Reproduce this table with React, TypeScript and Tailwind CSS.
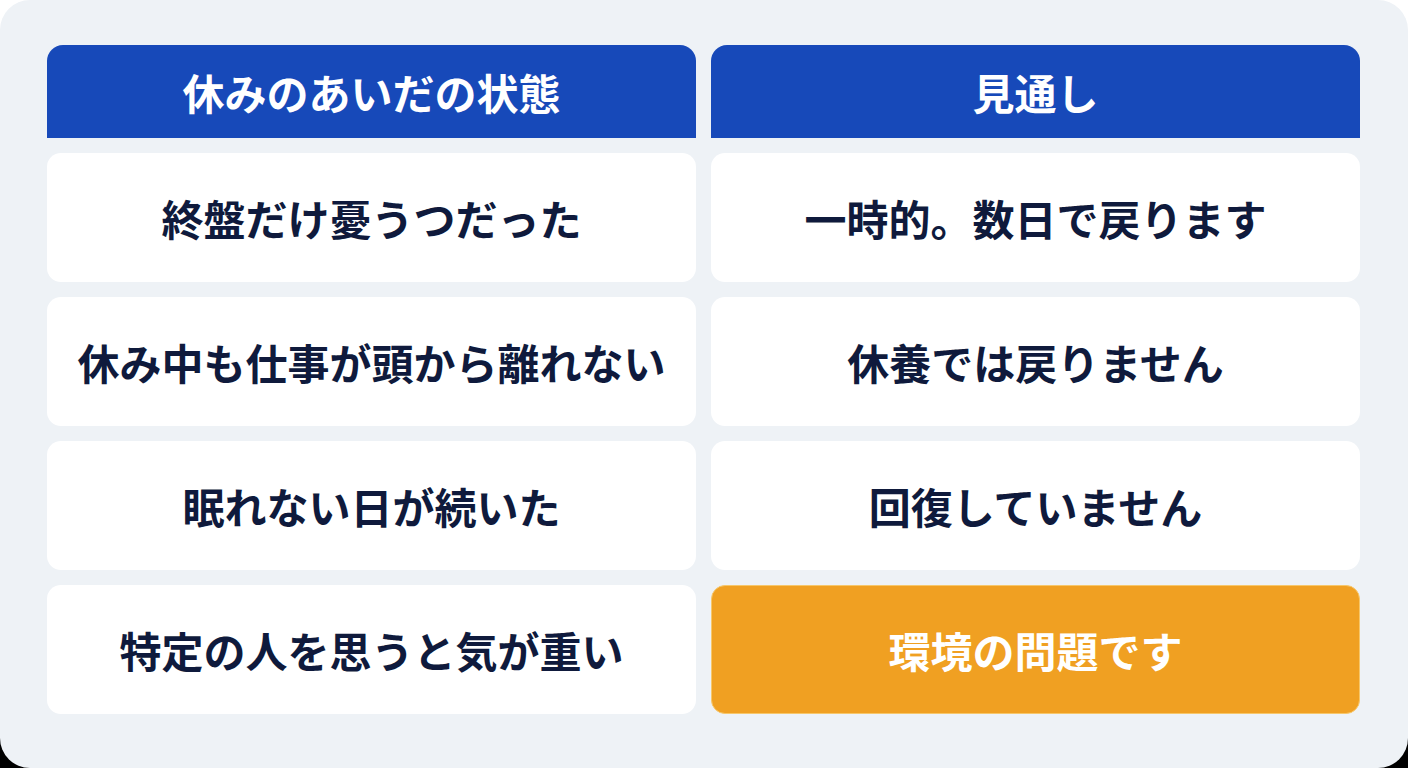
import React from "react";

const left = [
  "終盤だけ憂うつだった",
  "休み中も仕事が頭から離れない",
  "眠れない日が続いた",
  "特定の人を思うと気が重い",
];
const right = [
  "一時的。数日で戻ります",
  "休養では戻りません",
  "回復していません",
  "環境の問題です",
];

export default function App() {
  const font = { fontFamily: '"Noto Sans CJK JP", "Noto Sans", sans-serif' };
  return (
    <div className="w-[1408px] h-[768px] bg-[linear-gradient(to_bottom,#ffffff_50%,#000000_50%)]">
      <div
        className="w-full h-full rounded-[30px] bg-[#eef2f6] pl-[47px] pr-[48px] pt-[45px] pb-[54px]"
        style={font}
      >
        <div className="grid grid-cols-2 gap-x-[15px] gap-y-[15px] grid-rows-[93px_129px_129px_129px_129px]">
          <div className="bg-[#1749b9] rounded-t-[16px] flex items-center justify-center text-white text-[42px] font-bold leading-none">
            休みのあいだの状態
          </div>
          <div className="bg-[#1749b9] rounded-t-[16px] flex items-center justify-center text-white text-[42px] font-bold leading-none">
            見通し
          </div>
          {left.map((l, i) => (
            <React.Fragment key={i}>
              <div className="bg-white rounded-[14px] flex items-center justify-center text-[#0f1a3c] text-[42px] font-bold leading-none">
                {l}
              </div>
              {i === 3 ? (
                <div className="bg-[#f0a022] rounded-[14px] border border-[#f7c76a] flex items-center justify-center text-white text-[42px] font-bold leading-none">
                  {right[i]}
                </div>
              ) : (
                <div className="bg-white rounded-[14px] flex items-center justify-center text-[#0f1a3c] text-[42px] font-bold leading-none">
                  {right[i]}
                </div>
              )}
            </React.Fragment>
          ))}
        </div>
      </div>
    </div>
  );
}
